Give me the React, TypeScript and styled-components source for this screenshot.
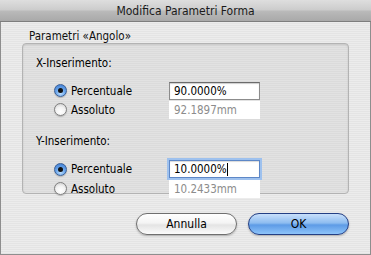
import styled, {createGlobalStyle} from 'styled-components';

const GlobalStyle = createGlobalStyle`
  html, body {
    margin: 0;
    padding: 0;
    background: #e8e8e8;
  }
  body {
    font-family: "DejaVu Sans Condensed", "DejaVu Sans", "Liberation Sans", sans-serif;
    font-stretch: condensed;
    font-size: 11.5px;
    color: #000;
  }
`;

const Window = styled.div`
  width: 371px;
  height: 255px;
  box-sizing: border-box;
  display: flex;
  flex-direction: column;
  border: 1px solid #8e8e8e;
  border-top: none;
  background: repeating-linear-gradient(180deg, #ececec 0 1px, #e4e4e4 1px 2px);
`;

const TitleBar = styled.div`
  height: 22px;
  flex: none;
  box-sizing: border-box;
  display: flex;
  align-items: center;
  justify-content: center;
  margin: 0 -1px;
  background: linear-gradient(180deg, #dedede 0%, #cdcdcd 45%, #b9b9b9 55%, #a9a9a9 100%);
  border-bottom: 1px solid #7d7d7d;
  font-size: 12px;
  color: #1a1a1a;
`;

const Body = styled.div`
  flex: 1;
  display: flex;
  flex-direction: column;
  padding: 7px 21px 0 21px;
`;

const Legend = styled.div`
  height: 14px;
  line-height: 14px;
  padding-left: 7px;
  color: #111;
`;

const GroupBox = styled.div`
  height: 151px;
  box-sizing: border-box;
  border: 1px solid #b3b3b3;
  border-radius: 4px;
  background: repeating-linear-gradient(180deg, #e2e2e2 0 1px, #dbdbdb 1px 2px);
  box-shadow: inset 0 1px 2px rgba(0, 0, 0, 0.12);
  padding: 12px 0 0 13px;
  display: flex;
  flex-direction: column;
`;

const Section = styled.div<{$gap: number}>`
  display: flex;
  flex-direction: column;
  margin-bottom: ${p => p.$gap}px;
`;

const SectionLabel = styled.div`
  height: 14px;
  line-height: 14px;
  margin-bottom: 11px;
`;

const OptionRow = styled.div<{$h?: number}>`
  display: flex;
  align-items: center;
  height: ${p => p.$h ?? 19}px;
  padding-left: 18px;
`;

const RadioLabel = styled.label`
  display: flex;
  align-items: center;
  gap: 4px;
  width: 115px;
`;

const Radio = styled.span<{$checked?: boolean}>`
  width: 13px;
  height: 13px;
  box-sizing: border-box;
  border-radius: 50%;
  display: flex;
  align-items: center;
  justify-content: center;
  border: 1px solid ${p => (p.$checked ? '#3a5f96' : '#7f7f7f')};
  background: ${p =>
    p.$checked
      ? 'radial-gradient(circle at 50% 75%, #bfe0ff 0%, #6aa5ea 45%, #3877d0 100%)'
      : 'radial-gradient(circle at 50% 70%, #ffffff 0%, #f2f2f2 50%, #c4c4c4 100%)'};
  box-shadow: 0 1px 1px rgba(0, 0, 0, 0.2);

  &::after {
    content: '';
    display: ${p => (p.$checked ? 'block' : 'none')};
    width: 5px;
    height: 5px;
    border-radius: 50%;
    background: #111;
  }
`;

const Field = styled.div<{$disabled?: boolean; $focused?: boolean}>`
  width: 91px;
  height: 18px;
  box-sizing: border-box;
  background: #fff;
  display: flex;
  align-items: center;
  padding-left: 4px;
  font-size: 11.5px;
  color: ${p => (p.$disabled ? '#8c8c8c' : '#000')};
  border: 1px solid ${p => (p.$disabled ? 'transparent' : p.$focused ? '#5d87c7' : '#8c8c8c')};
  border-top-color: ${p => (p.$disabled ? 'transparent' : p.$focused ? '#5d87c7' : '#6b6b6b')};
  box-shadow: ${p =>
    p.$focused
      ? '0 0 0 2px #9ec1ee, inset 0 1px 1px rgba(0,0,0,0.15)'
      : p.$disabled
        ? 'none'
        : 'inset 0 1px 1px rgba(0,0,0,0.2)'};
`;

const Caret = styled.span`
  display: inline-block;
  width: 1px;
  height: 13px;
  background: #000;
`;

const ButtonRow = styled.div`
  display: flex;
  justify-content: flex-end;
  gap: 11px;
  margin-top: 19px;
`;

const PushButton = styled.button<{$primary?: boolean}>`
  width: 101px;
  height: 22px;
  border-radius: 11px;
  font-family: inherit;
  font-stretch: condensed;
  font-size: 12px;
  color: #000;
  padding: 0;
  border: 1px solid ${p => (p.$primary ? '#243f84' : '#6f6f6f')};
  background: ${p =>
    p.$primary
      ? 'linear-gradient(180deg, #c9e0fb 0%, #8dbcf0 45%, #5d9be6 55%, #8ec4fa 100%)'
      : 'linear-gradient(180deg, #ffffff 0%, #f4f4f4 45%, #e4e4e4 55%, #fbfbfb 100%)'};
  box-shadow: 0 1px 2px rgba(0, 0, 0, 0.25);
`;

const App = () => {
  return <>
    <GlobalStyle/>
    <Window>
      <TitleBar>Modifica Parametri Forma</TitleBar>
      <Body>
        <Legend>Parametri «Angolo»</Legend>
        <GroupBox>
          <Section $gap={15}>
            <SectionLabel>X-Inserimento:</SectionLabel>
            <OptionRow>
              <RadioLabel><Radio $checked/>Percentuale</RadioLabel>
              <Field>90.0000%</Field>
            </OptionRow>
            <OptionRow>
              <RadioLabel><Radio/>Assoluto</RadioLabel>
              <Field $disabled>92.1897mm</Field>
            </OptionRow>
          </Section>
          <Section $gap={0}>
            <SectionLabel>Y-Inserimento:</SectionLabel>
            <OptionRow $h={20}>
              <RadioLabel><Radio $checked/>Percentuale</RadioLabel>
              <Field $focused>10.0000%<Caret/></Field>
            </OptionRow>
            <OptionRow>
              <RadioLabel><Radio/>Assoluto</RadioLabel>
              <Field $disabled>10.2433mm</Field>
            </OptionRow>
          </Section>
        </GroupBox>
        <ButtonRow>
          <PushButton>Annulla</PushButton>
          <PushButton $primary>OK</PushButton>
        </ButtonRow>
      </Body>
    </Window>
  </>;
};

export default App;
